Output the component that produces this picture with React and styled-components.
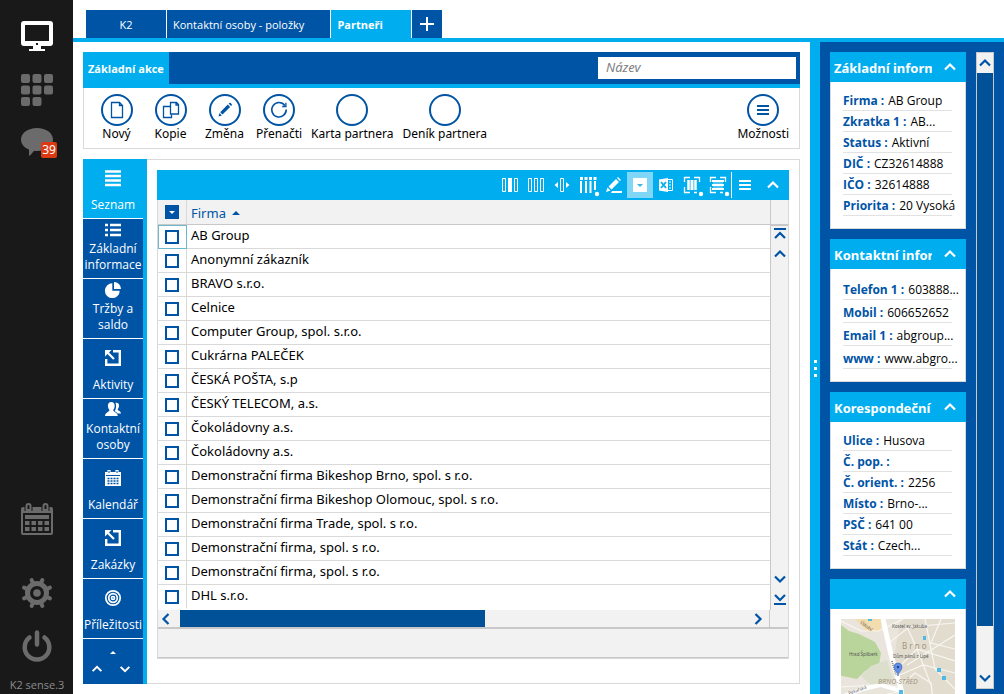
import styled, { createGlobalStyle } from "styled-components";
import { useState } from "react";

const BLUE = "#0054a6";
const CYAN = "#00aeef";
const LINE = "#d9d9d9";
const PALE = "#f2f2f2";
const NARROW = `"Open Sans", "Noto Sans", sans-serif`;

const tabs = ["K2", "Kontaktní osoby - položky", "Partneři"];

const actions = [
	{ label: "Nový", icon: "page" },
	{ label: "Kopie", icon: "copy" },
	{ label: "Změna", icon: "pencil" },
	{ label: "Přenačti", icon: "reload" },
	{ label: "Karta partnera" },
	{ label: "Deník partnera" },
];

const sections = [
	{ label: "Seznam", icon: "list" },
	{ label: "Základní informace", icon: "bullets" },
	{ label: "Tržby a saldo", icon: "pie" },
	{ label: "Aktivity", icon: "activity" },
	{ label: "Kontaktní osoby", icon: "people" },
	{ label: "Kalendář", icon: "smallCalendar" },
	{ label: "Zakázky", icon: "activity" },
	{ label: "Příležitosti", icon: "target" },
];

const tools = [
	{ name: "Pevný sloupec", icon: "colFixed" },
	{ name: "Sloupce", icon: "cols" },
	{ name: "Šířka sloupce", icon: "colWidth" },
	{ name: "Výběr sloupců", icon: "colPick" },
	{ name: "Upravit", icon: "edit" },
	{ name: "Filtr", icon: "filter", on: true },
	{ name: "Excel", icon: "excel" },
	{ name: "Označit sloupce", icon: "markCols" },
	{ name: "Označit řádky", icon: "markRows" },
];

const companies = [
	"AB Group",
	"Anonymní zákazník",
	"BRAVO s.r.o.",
	"Celnice",
	"Computer Group, spol. s.r.o.",
	"Cukrárna PALEČEK",
	"ČESKÁ POŠTA, s.p",
	"ČESKÝ TELECOM, a.s.",
	"Čokoládovny a.s.",
	"Čokoládovny a.s.",
	"Demonstrační firma Bikeshop Brno, spol. s r.o.",
	"Demonstrační firma Bikeshop Olomouc, spol. s r.o.",
	"Demonstrační firma Trade, spol. s r.o.",
	"Demonstrační firma, spol. s r.o.",
	"Demonstrační firma, spol. s r.o.",
	"DHL s.r.o.",
];

const cards = [
	{
		title: "Základní informace",
		rows: [
			["Firma", "AB Group"],
			["Zkratka 1", "AB..."],
			["Status", "Aktivní"],
			["DIČ", "CZ32614888"],
			["IČO", "32614888"],
			["Priorita", "20 Vysoká"],
		],
	},
	{
		title: "Kontaktní informace",
		tall: true,
		rows: [
			["Telefon 1", "603888..."],
			["Mobil", "606652652"],
			["Email 1", "abgroup..."],
			["www", "www.abgro..."],
		],
	},
	{
		title: "Korespondeční",
		rows: [
			["Ulice", "Husova"],
			["Č. pop.", ""],
			["Č. orient.", "2256"],
			["Místo", "Brno-..."],
			["PSČ", "641 00"],
			["Stát", "Czech..."],
		],
	},
];

const shapes = {
	page: (
		<path d="M2.500 .5h8l3 3v12h-11zM10.500 .5v3h3" fill="none" stroke="currentColor" strokeWidth="1.300" />
	),
	copy: (
		<g fill="none" stroke="currentColor" strokeWidth="1.300">
			<path d="M7.500 4.500h-7v11h8v-3" />
			<path d="M7.500 .5h6l2 2v9.500h-8zM13 .5v2.500h2.500" />
		</g>
	),
	pencil: (
		<g fill="currentColor">
			<path d="M1.500 14.500l1-3.500 2.400 2.400zM3.200 10.200L10.800 2.600l2.300 2.300-7.600 7.600z" />
			<path d="M11.700 1.700l.6-.6a1 1 0 0 1 1.400 0l.9.9a1 1 0 0 1 0 1.400l-.6.6z" />
		</g>
	),
	reload: (
		<g fill="none" stroke="currentColor" strokeWidth="1.600">
			<path d="M13.800 3.500a7.200 7.200 0 1 0 1.400 4" />
			<path d="M14.900 .8v3.700h-3.700" strokeWidth="1.300" />
		</g>
	),
	menu: <path d="M2 4h12M2 8h12M2 12h12" stroke="currentColor" strokeWidth="2" />,
	list: <path d="M0 1.500h16M0 6h16M0 10.500h16M0 15h16" stroke="currentColor" strokeWidth="2.600" />,
	bullets: (
		<path d="M0 3h3M5 3h11M0 8h3M5 8h11M0 13h3M5 13h11" stroke="currentColor" strokeWidth="2.300" />
	),
	pie: (
		<g fill="currentColor">
			<path d="M7.300 1.300v7.400h7.400A7.400 7.400 0 1 1 7.300 1.300z" />
			<path d="M9 0a7 7 0 0 1 7 7H9z" />
		</g>
	),
	activity: (
		<g fill="none" stroke="currentColor">
			<path d="M8 1.200h6.800v13.600H1.200V9" strokeWidth="2.400" />
			<path d="M2 2l7 7" strokeWidth="2.200" />
			<path d="M0 0h6.500L0 6.500z" fill="currentColor" stroke="none" />
		</g>
	),
	people: (
		<g fill="currentColor">
			<path d="M10.500 1c2-.6 3.800.7 3.500 3-.2 1.500-.8 2.500-1.300 3.200.2 1.600 3.300 1.700 3.300 4.300h-3.500c-.8-1.200-2.300-1.700-2.800-2.400C11.200 7 11.600 3.500 10.500 1z" />
			<path d="M6.300 0c2.300 0 3.600 1.700 3.400 4.200-.1 1.500-.9 3-1.500 3.700.1 2.300 4.300 2 4.600 6.100H0c.2-4.100 4.300-3.800 4.500-6.100C3.800 7.200 3 5.700 2.900 4.200 2.700 1.700 4 0 6.300 0z" />
		</g>
	),
	smallCalendar: (
		<g>
			<path d="M0 2h16v14H0z" fill="currentColor" />
			<path d="M4 0v4M12 0v4" stroke="currentColor" strokeWidth="3" />
			<path d="M4 1v2M12 1v2M1 5.500h14" stroke={BLUE} />
			<path d="M2.500 8.500h11M2.500 11h11M2.500 13.500h11" stroke={BLUE} strokeWidth="1.500" strokeDasharray="2 1" />
		</g>
	),
	target: (
		<g fill="none" stroke="currentColor" strokeWidth="1.700">
			<circle cx="8" cy="8" r="7.200" />
			<circle cx="8" cy="8" r="4.300" />
			<circle cx="8" cy="8" r="1.500" />
		</g>
	),
	colFixed: (
		<g fill="none" stroke="currentColor">
			<path d="M.5 1.500h3v13h-3zM12.500 1.500h3v13h-3z" />
			<path d="M6 1h4v14H6z" fill="currentColor" stroke="none" />
		</g>
	),
	cols: (
		<path d="M.5 1.500h3v13h-3zM6.500 1.500h3v13h-3zM12.500 1.500h3v13h-3z" fill="none" stroke="currentColor" />
	),
	colWidth: (
		<g fill="currentColor">
			<path d="M6.500 1.500h3v13h-3z" fill="none" stroke="currentColor" />
			<path d="M4 5v6L.5 8zM12 5v6l3.500-3z" />
		</g>
	),
	colPick: (
		<g fill="currentColor">
			<path d="M0 0h3v3H0zM4.500 0h3v3h-3zM9 0h3v3H9zM13.500 0h3v3h-3z" />
			<path d="M0 4h2v12H0zM5 4h2v12H5zM9.500 4h2v12h-2zM14 4h2v9h-2z" />
			<circle cx="17" cy="17" r="2.200" />
		</g>
	),
	edit: (
		<g fill="currentColor">
			<path d="M0 15l1.500-4.500 3 3zM2.500 9.500L10 2l3 3-7.500 7.500zM11 1l1-1 3 3-1 1z" />
			<path d="M6 14h10v2H5z" />
		</g>
	),
	filter: (
		<g>
			<path d="M1 1h14v14H1z" fill="#fff" />
			<path d="M5 7h6l-3 3z" fill="#39b4e6" />
		</g>
	),
	excel: (
		<g>
			<path d="M9.500 2.500h5v11h-5" fill="none" stroke="#fff" />
			<path d="M11 5h2M11 8h2M11 11h2" stroke="#fff" />
			<path d="M1 2.500L10 1v14l-9-1.500z" fill="#fff" />
			<path d="M3 5l5 6M8 5l-5 6" stroke={CYAN} strokeWidth="1.800" />
		</g>
	),
	markCols: (
		<g fill="none" stroke="currentColor">
			<path d="M.5 5V.5H6M10 .5h5.500V5M.5 10v5.500H6M10 15.500h3" strokeWidth="1.300" />
			<path d="M3 3h10v10H3z" fill="currentColor" fillOpacity=".5" stroke="none" />
			<path d="M4.500 3v10M8 3v10M11.500 3v10" strokeWidth="2" />
			<circle cx="17" cy="17" r="2.200" fill="currentColor" stroke="none" />
		</g>
	),
	markRows: (
		<g fill="none" stroke="currentColor">
			<path d="M.5 5V.5H6M10 .5h5.500V5M.5 10v5.500H6M10 15.500h3" strokeWidth="1.300" />
			<path d="M3 3h10v10H3z" fill="currentColor" fillOpacity=".3" stroke="none" />
			<path d="M2 4h12M2 8h12M2 12h12" strokeWidth="2" />
			<circle cx="17" cy="17" r="2.200" fill="currentColor" stroke="none" />
		</g>
	),
	up: <path d="M3 10.500L8 5.500l5 5" fill="none" stroke="currentColor" strokeWidth="2.200" />,
	down: <path d="M3 5.500l5 5 5-5" fill="none" stroke="currentColor" strokeWidth="2.200" />,
	left: <path d="M10.500 3l-5 5 5 5" fill="none" stroke="currentColor" strokeWidth="2.200" />,
	right: <path d="M5.500 3l5 5-5 5" fill="none" stroke="currentColor" strokeWidth="2.200" />,
	first: <path d="M2 3h12M3 12l5-5 5 5" fill="none" stroke="currentColor" strokeWidth="2.200" />,
	last: <path d="M2 13h12M3 4l5 5 5-5" fill="none" stroke="currentColor" strokeWidth="2.200" />,
	plus: <path d="M8 1v14M1 8h14" stroke="currentColor" strokeWidth="2" />,
};

const railShapes = {
	monitor: (
		<g fill="currentColor">
			<path fillRule="evenodd" d="M3 1h26a3 3 0 0 1 3 3v19a3 3 0 0 1-3 3H3a3 3 0 0 1-3-3V4a3 3 0 0 1 3-3zM4 5v16h24V5zM15 23v2h2v-2z" />
			<path d="M12 26h8v3h-8zM8 29h16v2H8z" />
		</g>
	),
	apps: (
		<g fill="currentColor">
			{[0, 1, 2, 3, 4, 5, 6, 7].map((n) => (
				<rect key={n} x={(n % 3) * 11.5} y={Math.floor(n / 3) * 11.5} width="9" height="9" rx="2" />
			))}
		</g>
	),
	chat: (
		<path d="M16 0c9 0 16 5 16 11.500S25 23 16 23c-1 0-2-.1-3-.2-1.500 2.200-3 4-5 5.200V21.500C3 19.500 0 16 0 11.500 0 5 7 0 16 0z" fill="currentColor" />
	),
	calendar: (
		<g>
			<path fillRule="evenodd" d="M2 4h28a2 2 0 0 1 2 2v24a2 2 0 0 1-2 2H2a2 2 0 0 1-2-2V6a2 2 0 0 1 2-2zM2 10v20h28V10z" fill="currentColor" />
			<path d="M5.500 8V3a2 2 0 0 1 4 0v5M22.500 8V3a2 2 0 0 1 4 0v5" fill="none" stroke="#191919" strokeWidth="4" />
			<path d="M5.500 7V3a2 2 0 0 1 4 0v4zM22.500 7V3a2 2 0 0 1 4 0v4z" fill="none" stroke="currentColor" strokeWidth="2" />
			<path d="M4 12h24v4H4z" fill="currentColor" />
			<path d="M4 20h24M4 26h24" stroke="currentColor" strokeWidth="4" strokeDasharray="4.500 2" />
		</g>
	),
	gear: (
		<g fill="none" stroke="currentColor">
			<circle cx="16" cy="16" r="9.500" strokeWidth="5" />
			<circle cx="16" cy="16" r="3.800" fill="currentColor" stroke="none" />
			{[22.5, 67.5, 112.5, 157.5, 202.5, 247.5, 292.5, 337.5].map((a) => (
				<path key={a} d="M16 5V2" strokeWidth="4" strokeLinecap="round" transform={`rotate(${a} 16 16)`} />
			))}
		</g>
	),
	power: (
		<g fill="none" stroke="currentColor" strokeWidth="4.500" strokeLinecap="round">
			<path d="M8.500 7.500a12.300 12.300 0 1 0 15 0" />
			<path d="M16 2.500v12" />
		</g>
	),
};

const Icon = ({ name, size = 16 }) => (
	<Svg viewBox="0 0 16 16" width={size} height={size} aria-hidden="true">
		{shapes[name]}
	</Svg>
);

const RailIcon = ({ name }) => (
	<Svg viewBox="0 0 32 32" width="32" height="32" aria-hidden="true">
		{railShapes[name]}
	</Svg>
);

const Map = () => (
	<MapSvg viewBox="0 0 114 100" role="img" aria-label="Brno">
		<path d="M0 0h114v100H0z" fill="#e9e5dc" />
		<path d="M60 0h54v100H72L52 42z" fill="#e2dccf" />
		<path d="M14 0h26v12l-14 1z" fill="#f3dcae" />
		<path d="M0 6l8 6 10 3 16 8 6 11-2 12-14 6-8 8-24-5z" fill="#b9d59c" />
		<path d="M20 57l10-10 16-6 6 20-22 5z" fill="#dcdfcc" />
		<g fill="none" stroke="#f8f6f1" strokeWidth="1.200">
			<path d="M0 2l20 10 18 0M38 12l24-12M48 24l20-16 46-4M66 8l10 22 38 12M76 30L54 52M76 30l14 36M66 46l48-30M84 0l10 50 20 20M54 58l28-12 32 8M60 66l14-12 16 10 4 36M100 0L90 24l24 6M0 68l30-2 30 2M26 80l34-8" />
		</g>
		<path d="M42 0l8 36 10 34 4 30" fill="none" stroke="#fff" strokeWidth="5" />
		<path d="M51 42l4 14" fill="none" stroke="#8d8775" strokeWidth="2" strokeDasharray="1 1" />
		<path d="M0 78l22-8 18-4 20 6" fill="none" stroke="#fff" strokeWidth="4" />
		<g fill="#4db9e4">
			<path d="M82 17h3v4h-3zM96 49h4v4h-4zM101 57h4v4h-4zM58 71h4v4h-4zM27 0h4v2h-4z" />
		</g>
		<g fill="#555" fontSize="4.500">
			<text x="51" y="9">Kostel sv. Jakuba</text>
			<text x="8" y="37">Hrad Špilberk</text>
			<text x="52" y="39">Dům pánů z Lipé</text>
			<text x="8" y="76" transform="rotate(-20 8 76)">Pekařská</text>
			<text x="19" y="4" transform="rotate(38 19 4)">Údolní</text>
		</g>
		<text x="61" y="30" fontSize="8" fill="#a3957d">B r n o</text>
		<text x="37" y="65" fontSize="7" fontStyle="italic" fill="#a3957d">BRNO-STŘED</text>
		<path d="M57 57c0-4-4-5-4-9a4 4 0 0 1 8 0c0 4-4 5-4 9z" fill="#5f8fe8" stroke="#3a62b0" strokeWidth=".6" />
		<circle cx="57" cy="48" r="1.200" fill="#27407c" />
	</MapSvg>
);

const InfoCard = ({ title, rows, tall, children }) => {
	const [open, setOpen] = useState(true);

	return (
		<Card>
			<CardHead>
				<h2>{title}</h2>
				<IconButton aria-label="Sbalit" onClick={() => setOpen(!open)}>
					<Icon name={open ? "up" : "down"} />
				</IconButton>
			</CardHead>
			{open && rows && (
				<InfoList>
					{rows.map(([label, value]) => (
						<InfoRow key={label} $tall={tall}>
							<dt>{label} :</dt>
							<dd>{value}</dd>
						</InfoRow>
					))}
				</InfoList>
			)}
			{open && children}
		</Card>
	);
};

const App = () => {
	const [tab, setTab] = useState(2);
	const [section, setSection] = useState(0);

	return (
		<>
			<GlobalStyle />
			<Page>
				<Rail>
					<RailButton $active aria-label="Plocha"><RailIcon name="monitor" /></RailButton>
					<RailButton aria-label="Aplikace"><RailIcon name="apps" /></RailButton>
					<RailButton aria-label="Zprávy">
						<RailIcon name="chat" />
						<Badge>39</Badge>
					</RailButton>
					<RailBottom>
						<RailButton $spaced aria-label="Kalendář"><RailIcon name="calendar" /></RailButton>
						<RailButton aria-label="Nastavení"><RailIcon name="gear" /></RailButton>
						<RailButton aria-label="Odhlásit"><RailIcon name="power" /></RailButton>
						<Version>K2 sense.3</Version>
					</RailBottom>
				</Rail>
				<Main>
					<Tabs>
						{tabs.map((t, i) => (
							<Tab key={t} $active={i === tab} $center={i === 0} onClick={() => setTab(i)}>{t}</Tab>
						))}
						<AddTab aria-label="Nová záložka"><Icon name="plus" /></AddTab>
					</Tabs>
					<Columns>
						<Workspace>
							<Ribbon>
								<RibbonHead>
									<RibbonTab>Základní akce</RibbonTab>
									<Search aria-label="Název" placeholder="Název" />
								</RibbonHead>
								<RibbonBody>
									{actions.map((a) => (
										<Action key={a.label}>
											<Circle>{a.icon && <Icon name={a.icon} />}</Circle>
											{a.label}
										</Action>
									))}
									<Action $end>
										<Circle><Icon name="menu" /></Circle>
										Možnosti
									</Action>
								</RibbonBody>
							</Ribbon>
							<Panel>
								<Sections>
									{sections.map((s, i) => (
										<Section key={s.label} $active={i === section} onClick={() => setSection(i)}>
											<SectionIcon><Icon name={s.icon} /></SectionIcon>
											<span>{s.label}</span>
										</Section>
									))}
									<Pager>
										<svg width="6" height="3" viewBox="0 0 6 3" aria-hidden="true"><path d="M0 3l3-3 3 3z" fill="#fff" /></svg>
										<PagerButtons>
											<IconButton aria-label="Nahoru"><Icon name="up" size={14} /></IconButton>
											<IconButton aria-label="Dolů"><Icon name="down" size={14} /></IconButton>
										</PagerButtons>
									</Pager>
								</Sections>
								<Grid>
									<GridTools>
										{tools.map((t) => (
											<Tool key={t.name} $on={t.on} aria-label={t.name}><Icon name={t.icon} /></Tool>
										))}
										<Tool $menu aria-label="Nabídka"><Icon name="menu" /></Tool>
										<Tool $collapse aria-label="Sbalit"><Icon name="up" /></Tool>
									</GridTools>
									<GridBody>
										<TableArea>
											<Table>
												<thead>
													<tr>
														<CheckHead>
															<MarkButton aria-label="Označit">
																<svg width="6" height="3" viewBox="0 0 6 3" aria-hidden="true"><path d="M0 0h6L3 3z" fill="#fff" /></svg>
															</MarkButton>
														</CheckHead>
														<NameHead>
															Firma
															<svg width="8" height="4" viewBox="0 0 8 4" aria-hidden="true"><path d="M0 4l4-4 4 4z" fill={BLUE} /></svg>
														</NameHead>
													</tr>
												</thead>
												<tbody>
													{companies.map((c, i) => (
														<tr key={i}>
															<CheckCell $focus={i === 0}><Check type="checkbox" aria-label={c} /></CheckCell>
															<NameCell>{c}</NameCell>
														</tr>
													))}
												</tbody>
											</Table>
										</TableArea>
										<VScroll>
											<VCorner />
											<IconButton aria-label="První"><Icon name="first" /></IconButton>
											<IconButton aria-label="Předchozí"><Icon name="up" /></IconButton>
											<Spacer />
											<IconButton aria-label="Další"><Icon name="down" /></IconButton>
											<IconButton aria-label="Poslední"><Icon name="last" /></IconButton>
										</VScroll>
									</GridBody>
									<HScroll>
										<IconButton aria-label="Vlevo"><Icon name="left" /></IconButton>
										<HTrack><HThumb /></HTrack>
										<IconButton aria-label="Vpravo"><Icon name="right" /></IconButton>
										<HCorner />
									</HScroll>
									<GridFoot />
								</Grid>
							</Panel>
						</Workspace>
						<Splitter><i /><i /><i /></Splitter>
						<Aside>
							<Cards>
								{cards.map((c) => <InfoCard key={c.title} {...c} />)}
								<InfoCard><MapBox><Map /></MapBox></InfoCard>
							</Cards>
							<SideScroll>
								<IconButton aria-label="Posunout nahoru"><Icon name="up" /></IconButton>
								<SideTrack><SideThumb /></SideTrack>
								<IconButton aria-label="Posunout dolů"><Icon name="down" /></IconButton>
							</SideScroll>
						</Aside>
					</Columns>
				</Main>
			</Page>
		</>
	);
};

const GlobalStyle = createGlobalStyle`
	* {
		box-sizing: border-box;
	}
	body {
		margin: 0;
		background: #fff;
		color: #000;
		font-family: "Noto Sans", "Open Sans", sans-serif;
		font-size: 12px;
	}
	button, input {
		font-family: inherit;
	}
	button {
		border: none;
		padding: 0;
		background: transparent;
		color: inherit;
		cursor: pointer;
	}
`;

const Svg = styled.svg`
	display: block;
	flex-shrink: 0;
	overflow: visible;
`;

const IconButton = styled.button`
	display: flex;
	align-items: center;
	justify-content: center;
	flex-shrink: 0;
`;

const Page = styled.div`
	display: flex;
	height: 100vh;
	overflow: hidden;
`;

const Rail = styled.nav`
	display: flex;
	flex-direction: column;
	align-items: center;
	gap: 22px;
	width: 73px;
	flex-shrink: 0;
	padding: 20px 0 2px 1px;
	background: #191919;
`;

const RailButton = styled.button`
	position: relative;
	color: ${(props) => (props.$active ? "#fff" : "#6b6b6b")};
	margin-bottom: ${(props) => (props.$spaced ? "21px" : "0")};
`;

const Badge = styled.span`
	position: absolute;
	left: 20px;
	top: 14px;
	width: 16px;
	height: 16px;
	border-radius: 2px;
	background: #dc3912;
	color: #fff;
	font-size: 12px;
	line-height: 16px;
	text-align: center;
`;

const RailBottom = styled.div`
	display: flex;
	flex-direction: column;
	align-items: center;
	gap: 21px;
	margin-top: auto;
`;

const Version = styled.span`
	color: #8c8c8c;
	font-family: ${NARROW};
	font-size: 11px;
	line-height: 14px;
	margin-top: -5px;
`;

const Main = styled.main`
	display: flex;
	flex-direction: column;
	flex: 1;
	min-width: 0;
`;

const Tabs = styled.div`
	display: flex;
	gap: 1px;
	padding: 10px 13px 0;
	border-bottom: 4px solid ${CYAN};
`;

const Tab = styled.button`
	min-width: 80px;
	height: 28px;
	padding: 0 26px 0 6px;
	background: ${(props) => (props.$active ? CYAN : BLUE)};
	color: #fff;
	font-family: ${NARROW};
	font-size: 11px;
	font-weight: ${(props) => (props.$active ? 700 : 400)};
	text-align: left;
	${(props) => props.$center && "padding: 0 16px 0 6px; text-align: center; padding: 0 6px;"}
`;

const AddTab = styled.button`
	display: flex;
	align-items: center;
	justify-content: center;
	width: 30px;
	height: 28px;
	background: ${BLUE};
	color: #fff;
`;

const Columns = styled.div`
	display: flex;
	flex: 1;
	min-height: 0;
`;

const Workspace = styled.div`
	display: flex;
	flex-direction: column;
	gap: 10px;
	flex: 1;
	min-width: 0;
	padding: 10px;
`;

const Ribbon = styled.section`
	flex-shrink: 0;
`;

const RibbonHead = styled.div`
	display: flex;
	justify-content: space-between;
	align-items: flex-start;
	height: 36px;
	background: ${BLUE};
	border-bottom: 4px solid ${CYAN};
`;

const RibbonTab = styled.button`
	align-self: stretch;
	padding: 0 5px;
	background: ${CYAN};
	color: #fff;
	font-family: ${NARROW};
	font-size: 11px;
	font-weight: 700;
`;

const Search = styled.input`
	width: 198px;
	height: 22px;
	margin: 5px 4px 0 0;
	padding: 0 8px 2px;
	border: none;
	background: #fff;
	font-size: 13px;
	&::placeholder {
		color: #808080;
		font-style: italic;
	}
`;

const RibbonBody = styled.div`
	display: flex;
	align-items: flex-start;
	gap: 9px;
	padding: 6px 10px;
	border: 1px solid ${LINE};
	border-top: none;
`;

const Action = styled.button`
	display: flex;
	flex-direction: column;
	align-items: center;
	min-width: 45px;
	font-size: 12px;
	line-height: 16px;
	white-space: nowrap;
	color: #000;
	margin-left: ${(props) => (props.$end ? "auto" : "0")};
`;

const Circle = styled.span`
	display: flex;
	align-items: center;
	justify-content: center;
	width: 32px;
	height: 32px;
	border: 2px solid ${BLUE};
	border-radius: 50%;
	color: ${BLUE};
`;

const Panel = styled.section`
	display: flex;
	flex: 1;
	min-height: 0;
	border: 1px solid ${LINE};
	border-left: none;
`;

const Sections = styled.nav`
	display: flex;
	flex-direction: column;
	width: 64px;
	flex-shrink: 0;
	margin: -1px 0;
	border-right: 4px solid ${CYAN};
	background: ${BLUE};
`;

const Section = styled.button`
	display: flex;
	flex-direction: column;
	height: 60px;
	flex-shrink: 0;
	padding-bottom: 5px;
	border-bottom: 1px solid #fff;
	background: ${(props) => (props.$active ? CYAN : BLUE)};
	color: #fff;
	font-family: ${NARROW};
	font-size: 12px;
	line-height: 16px;
	text-align: center;
	span {
		align-self: center;
	}
`;

const SectionIcon = styled.span`
	display: flex;
	align-items: center;
	flex: 1;
`;

const Pager = styled.div`
	display: flex;
	flex-direction: column;
	align-items: center;
	gap: 8px;
	flex: 1;
	padding-top: 12px;
	color: #fff;
`;

const PagerButtons = styled.div`
	display: flex;
	gap: 14px;
	padding-right: 4px;
`;

const Grid = styled.div`
	display: flex;
	flex-direction: column;
	flex: 1;
	min-width: 0;
	margin: 10px 10px 24px;
	border: 1px solid ${LINE};
	border-top: none;
`;

const GridTools = styled.div`
	display: flex;
	justify-content: flex-end;
	align-items: center;
	height: 30px;
	flex-shrink: 0;
	margin: 0 -1px;
	padding-right: 3px;
	background: ${CYAN};
	color: #fff;
`;

const Tool = styled.button`
	display: flex;
	align-items: center;
	justify-content: center;
	width: 26px;
	height: 26px;
	background: ${(props) => (props.$on ? "#80d6f7" : "transparent")};
	border-left: ${(props) => (props.$menu ? "1px solid #fff" : "none")};
	margin-left: ${(props) => (props.$collapse ? "3px" : "0")};
`;

const GridBody = styled.div`
	display: flex;
	flex: 1;
	min-height: 0;
`;

const TableArea = styled.div`
	flex: 1;
	min-width: 0;
	overflow: hidden;
`;

const Table = styled.table`
	width: 100%;
	border-collapse: separate;
	border-spacing: 0;
	table-layout: fixed;
	tbody tr:last-child td {
		border-bottom-color: transparent;
	}
`;

const CheckHead = styled.th`
	width: 29px;
	height: 25px;
	padding: 0 0 0 7px;
	background: ${PALE};
	border-right: 1px solid ${LINE};
	border-bottom: 1px solid #c8c8c8;
`;

const NameHead = styled.th`
	height: 25px;
	padding: 2px 4px 0;
	background: ${PALE};
	border-bottom: 1px solid #c8c8c8;
	color: ${BLUE};
	font-size: 13px;
	font-weight: 400;
	line-height: 18px;
	text-align: left;
	svg {
		margin: 0 0 4px 6px;
		vertical-align: middle;
	}
`;

const MarkButton = styled.button`
	display: flex;
	align-items: center;
	justify-content: center;
	width: 14px;
	height: 14px;
	background: ${BLUE};
`;

const CheckCell = styled.td`
	height: 24px;
	padding: 0 0 0 ${(props) => (props.$focus ? "6px" : "7px")};
	border-right: 1px solid ${LINE};
	border-bottom: 1px solid ${LINE};
	${(props) => props.$focus && "border: 1px solid #6cb8cc;"}
`;

const NameCell = styled.td`
	height: 24px;
	padding: 0 4px 4px;
	border-bottom: 1px solid ${LINE};
	font-size: 13px;
	line-height: 18px;
	white-space: nowrap;
`;

const Check = styled.input`
	appearance: none;
	display: block;
	width: 14px;
	height: 14px;
	margin: 0;
	border: 2px solid ${BLUE};
	background: #fff;
	&:checked {
		background: ${BLUE};
	}
`;

const VScroll = styled.div`
	display: flex;
	flex-direction: column;
	align-items: center;
	gap: 4px;
	width: 18px;
	flex-shrink: 0;
	padding-bottom: 3px;
	border-left: 1px solid #c8c8c8;
	background: ${PALE};
	color: ${BLUE};
`;

const VCorner = styled.div`
	align-self: stretch;
	height: 26px;
	flex-shrink: 0;
	margin-bottom: -4px;
	border-bottom: 2px solid #c8c8c8;
`;

const Spacer = styled.div`
	flex: 1;
`;

const HScroll = styled.div`
	display: flex;
	height: 19px;
	flex-shrink: 0;
	border-bottom: 2px solid #c8c8c8;
	background: ${PALE};
	color: ${BLUE};
	gap: 3px;
`;

const HTrack = styled.div`
	flex: 1;
	margin: 0 3px;
`;

const HThumb = styled.div`
	width: 54%;
	height: 100%;
	background: #005198;
`;

const HCorner = styled.div`
	width: 19px;
	border-left: 1px solid #c8c8c8;
`;

const GridFoot = styled.div`
	height: 29px;
	flex-shrink: 0;
	background: ${PALE};
	border-bottom: 1px solid #c8c8c8;
`;

const Splitter = styled.div`
	display: flex;
	flex-direction: column;
	align-items: center;
	justify-content: center;
	gap: 4px;
	width: 10px;
	flex-shrink: 0;
	background: ${CYAN};
	i {
		width: 3px;
		height: 3px;
		background: #fff;
	}
`;

const Aside = styled.aside`
	display: flex;
	gap: 10px;
	width: 184px;
	flex-shrink: 0;
	padding: 10px 10px 0;
	background: ${BLUE};
`;

const Cards = styled.div`
	display: flex;
	flex-direction: column;
	gap: 10px;
	flex: 1;
	min-width: 0;
	overflow: hidden;
`;

const Card = styled.section`
	flex-shrink: 0;
	background: #fff;
	border: 1px solid ${LINE};
	border-top: none;
`;

const CardHead = styled.div`
	display: flex;
	align-items: center;
	justify-content: space-between;
	gap: 10px;
	height: 30px;
	margin: 0 -1px;
	padding: 0 8px 0 4px;
	background: ${CYAN};
	color: #fff;
	h2 {
		flex: 1;
		margin: 0;
		padding-top: 2px;
		overflow: hidden;
		font-size: 13px;
		font-weight: 700;
		line-height: 20px;
		white-space: nowrap;
	}
`;

const InfoList = styled.dl`
	margin: 0;
	padding: 8px 13px 12px 12px;
`;

const InfoRow = styled.div`
	display: flex;
	align-items: center;
	gap: 4px;
	height: ${(props) => (props.$tall ? "23px" : "21px")};
	padding-top: ${(props) => (props.$tall ? "4px" : "2px")};
	border-bottom: 1px solid #e2e2e2;
	font-family: ${NARROW};
	font-size: 12px;
	line-height: 16px;
	white-space: nowrap;
	dt {
		color: ${BLUE};
		font-weight: 700;
	}
	dd {
		margin: 0;
	}
`;

const MapBox = styled.div`
	padding: 10px;
`;

const MapSvg = styled.svg`
	display: block;
	width: 100%;
`;

const SideScroll = styled.div`
	display: flex;
	flex-direction: column;
	align-items: center;
	width: 18px;
	margin-bottom: 5px;
	border: 1px solid #c8c8c8;
	background: ${PALE};
	color: ${BLUE};
	button {
		height: 20px;
	}
`;

const SideTrack = styled.div`
	flex: 1;
	align-self: stretch;
`;

const SideThumb = styled.div`
	width: 100%;
	height: 93%;
	background: #005198;
`;

export default App;
